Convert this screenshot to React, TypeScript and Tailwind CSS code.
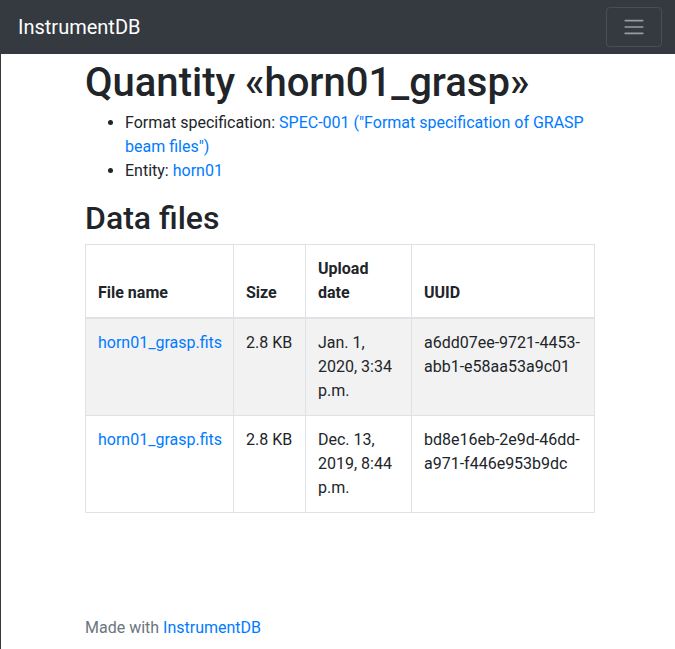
import React from "react";

const link = "text-[#007bff]";

export default function App() {
  const rows = [
    { name: "horn01_grasp.fits", size: "2.8 KB", date: ["Jan. 1,", "2020, 3:34", "p.m."], uuid: "a6dd07ee-9721-4453-abb1-e58aa53a9c01", striped: true },
    { name: "horn01_grasp.fits", size: "2.8 KB", date: ["Dec. 13,", "2019, 8:44", "p.m."], uuid: "bd8e16eb-2e9d-46dd-a971-f446e953b9dc", striped: false },
  ];
  return (
    <div className="min-h-[649px] flex flex-col bg-white text-[#212529] text-[16px] leading-[24px]" style={{ fontFamily: "Roboto, 'Liberation Sans', sans-serif" }}>
      <nav className="h-[54px] bg-[#343a40] flex items-center justify-between pl-[18px] pr-[13px]">
        <span className="text-white text-[20px] leading-[30px]">InstrumentDB</span>
        <button className="w-[56px] h-[40px] border border-[rgba(255,255,255,0.1)] rounded-[4px] flex items-center justify-center">
          <svg width="30" height="30" viewBox="0 0 30 30">
            <path d="M4 7h22M4 15h22M4 23h22" stroke="rgba(255,255,255,0.5)" strokeWidth="2" strokeLinecap="round" transform="translate(3 3) scale(0.8)" />
          </svg>
        </button>
      </nav>
      <div className="flex-1 flex flex-col border-l border-[#343a40]">
        <main className="pl-[84px] w-[594px]">
          <h1 className="text-[40px] leading-[48px] font-medium mt-[5px] mb-[4px]">Quantity «horn01_grasp»</h1>
          <ul className="list-disc pl-[40px] mb-[16px]">
            <li>
              Format specification: <a className={link}>SPEC-001 ("Format specification of GRASP beam files")</a>
            </li>
            <li>
              Entity: <a className={link}>horn01</a>
            </li>
          </ul>
          <h2 className="text-[32px] leading-[38px] font-medium mb-[7px] mt-[16px]">Data files</h2>
          <table className="w-[509px] table-fixed border-collapse border border-[#dee2e6]">
            <colgroup>
              <col className="w-[148px]" />
              <col className="w-[72px]" />
              <col className="w-[106px]" />
              <col className="w-[183px]" />
            </colgroup>
            <thead>
              <tr>
                <th className="text-left align-bottom font-bold p-[12px] border border-[#dee2e6] border-b-2">File name</th>
                <th className="text-left align-bottom font-bold p-[12px] border border-[#dee2e6] border-b-2">Size</th>
                <th className="text-left align-bottom font-bold p-[12px] border border-[#dee2e6] border-b-2">Upload date</th>
                <th className="text-left align-bottom font-bold p-[12px] border border-[#dee2e6] border-b-2">UUID</th>
              </tr>
            </thead>
            <tbody>
              {rows.map((r, i) => (
                <tr key={i} className={r.striped ? "bg-[#f2f2f2]" : ""}>
                  <td className="align-top p-[12px] border border-[#dee2e6]"><a className={link}>{r.name}</a></td>
                  <td className="align-top p-[12px] border border-[#dee2e6]">{r.size}</td>
                  <td className="align-top p-[12px] border border-[#dee2e6]">
                    {r.date.map((d, j) => (<div key={j}>{d}</div>))}
                  </td>
                  <td className="align-top p-[12px] border border-[#dee2e6] break-all">{r.uuid}</td>
                </tr>
              ))}
            </tbody>
          </table>
        </main>
        <footer className="mt-auto pl-[84px] pb-[9px] text-[#6c757d]">
          Made with <a className={link}>InstrumentDB</a>
        </footer>
      </div>
    </div>
  );
}
